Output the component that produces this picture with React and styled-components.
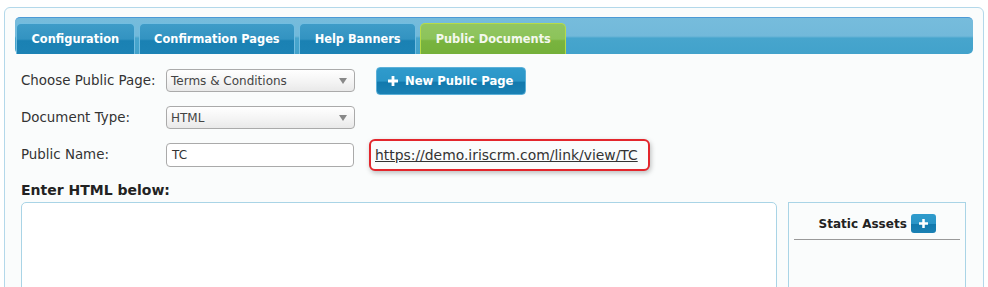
import React from "react";
import styled, { createGlobalStyle } from "styled-components";

const GlobalStyle = createGlobalStyle`
  html, body {
    margin: 0;
    padding: 0;
    background: #fff;
    font-family: "DejaVu Sans", Verdana, sans-serif;
    color: #333;
  }
`;

const Page = styled.div`
  padding: 7px 4px 0 4px;
  height: 280px;
  overflow: hidden;
`;

const Panel = styled.div`
  width: 980px;
  height: 300px;
  border: 1px solid #b3d8ea;
  border-radius: 6px;
  background: #fafcfc;
  padding: 9px 10px 0 10px;
  box-sizing: border-box;
`;

const TabBar = styled.div`
  height: 37px;
  box-sizing: border-box;
  border-top: 1px solid #4b9ad6;
  border-radius: 5px;
  background: linear-gradient(
    to bottom,
    #76bcdc 0%,
    #72b9da 50%,
    #47a5cd 56%,
    #42a2cb 100%
  );
  display: flex;
  align-items: flex-end;
  gap: 4px;
  padding-left: 1px;
`;

const Tab = styled.div`
  height: 31px;
  box-sizing: border-box;
  padding: 0 14.5px;
  display: flex;
  align-items: center;
  border: 1px solid ${(p) => (p.active ? "#b6db48" : "#72bde0")};
  border-bottom: none;
  border-radius: 5px 5px 0 0;
  background: ${(p) =>
    p.active
      ? "linear-gradient(to bottom, #92c662 0%, #8cc35a 50%, #79b43f 56%, #74b03a 100%)"
      : "linear-gradient(to bottom, #3e9cc8 0%, #3393c1 50%, #1a81b3 56%, #1c83b5 100%)"};
  color: ${(p) => (p.active ? "#f4f8ee" : "#fff")};
  font-size: 11.4px;
  font-weight: bold;
  white-space: nowrap;
`;

const Form = styled.div`
  padding: 8px 7px 0 6px;
`;

const Row = styled.div`
  display: flex;
  align-items: center;
  height: 37px;
`;

const Label = styled.div`
  width: 145px;
  font-size: 13.4px;
  color: #333;
`;

const Select = styled.div`
  width: 189px;
  height: 23px;
  box-sizing: border-box;
  border: 1px solid #aaa;
  border-radius: 4px;
  background: linear-gradient(to bottom, #fff 0%, #f3f3f3 60%, #e9e9e9 100%);
  display: flex;
  align-items: center;
  justify-content: space-between;
  padding: 0 7px 0 4px;
  font-size: 12px;
  color: #444;
`;

const Caret = styled.span`
  width: 0;
  height: 0;
  border-left: 4px solid transparent;
  border-right: 4px solid transparent;
  border-top: 6px solid #888;
`;

const TextInput = styled.div`
  width: 188px;
  height: 24px;
  box-sizing: border-box;
  border: 1px solid #aaa;
  border-radius: 4px;
  background: #fff;
  display: flex;
  align-items: center;
  padding: 0 5px;
  font-size: 12px;
  color: #333;
`;

const Button = styled.div`
  margin-left: 21px;
  height: 28px;
  box-sizing: border-box;
  padding: 0 12px 0 11px;
  display: flex;
  align-items: center;
  gap: 7px;
  border: 1px solid #5cb0d8;
  border-radius: 4px;
  background: linear-gradient(to bottom, #2f9bcc 0%, #2a95c7 50%, #1279ad 55%, #1a81b4 100%);
  color: #fff;
  font-size: 11.6px;
  font-weight: bold;
`;

const LinkBox = styled.div`
  margin-left: 15px;
  height: 32px;
  box-sizing: border-box;
  border: 2px solid #e3262c;
  border-radius: 6px;
  box-shadow: 1px 2px 5px rgba(0, 0, 0, 0.25);
  display: flex;
  align-items: center;
  padding: 0 10px 0 4px;
  background: #fafcfc;
`;

const Link = styled.a`
  color: #333;
  font-size: 13.9px;
  text-decoration: underline;
`;

const Heading = styled.div`
  margin-top: 9px;
  font-size: 14px;
  font-weight: bold;
  color: #222;
`;

const Editor = styled.div`
  display: flex;
  gap: 11px;
  margin-top: 4px;
`;

const TextArea = styled.div`
  width: 758px;
  height: 120px;
  box-sizing: border-box;
  border: 1px solid #a9d4e6;
  border-radius: 5px 5px 0 0;
  background: #fff;
`;

const Assets = styled.div`
  width: 178px;
  height: 120px;
  box-sizing: border-box;
  border: 1px solid #a9d4e6;
  padding: 11px 5px 0 5px;
`;

const AssetsHeader = styled.div`
  display: flex;
  justify-content: center;
  align-items: center;
  gap: 4px;
  padding-bottom: 6px;
  border-bottom: 1px solid #999;
  font-size: 12px;
  font-weight: bold;
  color: #222;
`;

const SmallButton = styled.div`
  width: 25px;
  height: 19px;
  border-radius: 3px;
  background: linear-gradient(to bottom, #2f9bcc 0%, #2a95c7 50%, #1279ad 55%, #1a81b4 100%);
  display: flex;
  align-items: center;
  justify-content: center;
`;

const Plus = ({ size = 10 }) => (
  <svg width={size} height={size} viewBox="0 0 10 10">
    <path d="M3.6 0h2.8v3.6H10v2.8H6.4V10H3.6V6.4H0V3.6h3.6z" fill="#fff" />
  </svg>
);

const tabs = ["Configuration", "Confirmation Pages", "Help Banners", "Public Documents"];

export default function App() {
  return (
    <Page>
      <GlobalStyle />
      <Panel>
        <TabBar>
          {tabs.map((t) => (
            <Tab key={t} active={t === "Public Documents"}>
              {t}
            </Tab>
          ))}
        </TabBar>
        <Form>
          <Row>
            <Label>Choose Public Page:</Label>
            <Select>
              Terms &amp; Conditions
              <Caret />
            </Select>
            <Button>
              <Plus />
              New Public Page
            </Button>
          </Row>
          <Row>
            <Label>Document Type:</Label>
            <Select>
              HTML
              <Caret />
            </Select>
          </Row>
          <Row>
            <Label>Public Name:</Label>
            <TextInput>TC</TextInput>
            <LinkBox>
              <Link href="#">https://demo.iriscrm.com/link/view/TC</Link>
            </LinkBox>
          </Row>
          <Heading>Enter HTML below:</Heading>
          <Editor>
            <TextArea />
            <Assets>
              <AssetsHeader>
                Static Assets
                <SmallButton>
                  <Plus size={9} />
                </SmallButton>
              </AssetsHeader>
            </Assets>
          </Editor>
        </Form>
      </Panel>
    </Page>
  );
}
